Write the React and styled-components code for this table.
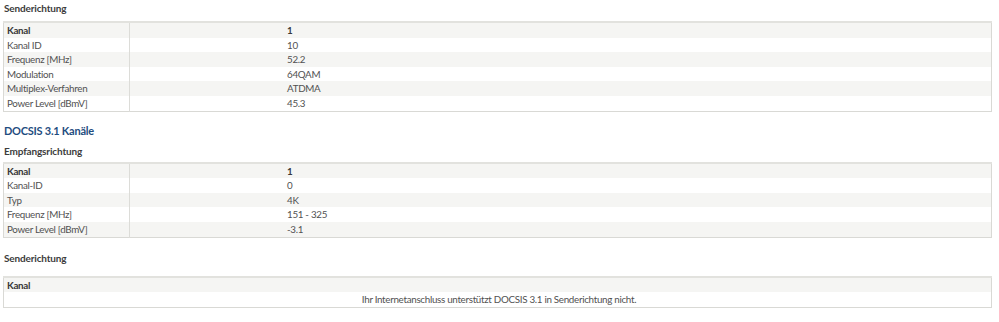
import styled, { createGlobalStyle } from "styled-components";

const GlobalStyle = createGlobalStyle`
  html, body {
    margin: 0;
    padding: 0;
    background: #ffffff;
  }
  body {
    font-family: "Lato", "Liberation Sans", sans-serif;
    color: #4d4d4d;
  }
`;

const Page = styled.div`
  width: 999px;
  padding: 0 7px 0 3px;
  box-sizing: border-box;
`;

const SubTitle = styled.h4`
  margin: 0;
  padding-left: 1px;
  font-size: 10px;
  font-weight: 700;
  letter-spacing: -0.15px;
  color: #3c3c3c;
  line-height: 14px;
  height: ${(p) => p.$height || 22}px;
  padding-top: ${(p) => p.$top || 1}px;
  box-sizing: border-box;
`;

const SectionTitle = styled.h3`
  margin: 0;
  padding: 11px 0 0 1px;
  height: 27px;
  box-sizing: border-box;
  font-size: 11px;
  font-weight: 700;
  letter-spacing: -0.25px;
  line-height: 16px;
  color: #1f4d80;
`;

const Table = styled.table`
  width: 100%;
  border-collapse: collapse;
  border: 1px solid #d9d9d5;
  border-top: 2px solid #e2e2de;
  font-size: 9.8px;
  letter-spacing: -0.3px;
  line-height: 14.6px;
`;

const Row = styled.tr`
  height: 14.6px;
  background: ${(p) => (p.$striped ? "#f5f5f3" : "#ffffff")};
`;

const Label = styled.td`
  width: 122px;
  padding: 0 0 0 3px;
  border-right: 1px solid #dcdcd8;
  font-weight: ${(p) => (p.$head ? 700 : 400)};
  color: ${(p) => (p.$head ? "#383838" : "#515151")};
  white-space: nowrap;
`;

const Value = styled.td`
  padding: 0 0 0 157px;
  font-weight: ${(p) => (p.$head ? 700 : 400)};
  color: ${(p) => (p.$head ? "#383838" : "#515151")};
`;

const Full = styled.td`
  padding: 0 0 0 3px;
  font-weight: ${(p) => (p.$head ? 700 : 400)};
  color: ${(p) => (p.$head ? "#383838" : "#515151")};
  text-align: ${(p) => (p.$center ? "center" : "left")};
`;

const upstream = [
  ["Kanal", "1"],
  ["Kanal ID", "10"],
  ["Frequenz [MHz]", "52.2"],
  ["Modulation", "64QAM"],
  ["Multiplex-Verfahren", "ATDMA"],
  ["Power Level [dBmV]", "45.3"],
];

const downstream31 = [
  ["Kanal", "1"],
  ["Kanal-ID", "0"],
  ["Typ", "4K"],
  ["Frequenz [MHz]", "151 - 325"],
  ["Power Level [dBmV]", "-3.1"],
];

function ChannelTable({ rows }) {
  return (
    <Table>
      <tbody>
        {rows.map(([label, value], i) => (
          <Row key={label} $striped={i % 2 === 0}>
            <Label $head={i === 0}>{label}</Label>
            <Value $head={i === 0}>{value}</Value>
          </Row>
        ))}
      </tbody>
    </Table>
  );
}

export default function App() {
  return (
    <Page>
      <GlobalStyle />
      <SubTitle $height={21}>Senderichtung</SubTitle>
      <ChannelTable rows={upstream} />
      <SectionTitle>DOCSIS 3.1 Kanäle</SectionTitle>
      <SubTitle $height={23} $top={5}>Empfangsrichtung</SubTitle>
      <ChannelTable rows={downstream31} />
      <SubTitle $height={38} $top={13}>Senderichtung</SubTitle>
      <Table>
        <tbody>
          <Row $striped>
            <Full $head>Kanal</Full>
          </Row>
          <Row>
            <Full $center>Ihr Internetanschluss unterstützt DOCSIS 3.1 in Senderichtung nicht.</Full>
          </Row>
        </tbody>
      </Table>
    </Page>
  );
}
